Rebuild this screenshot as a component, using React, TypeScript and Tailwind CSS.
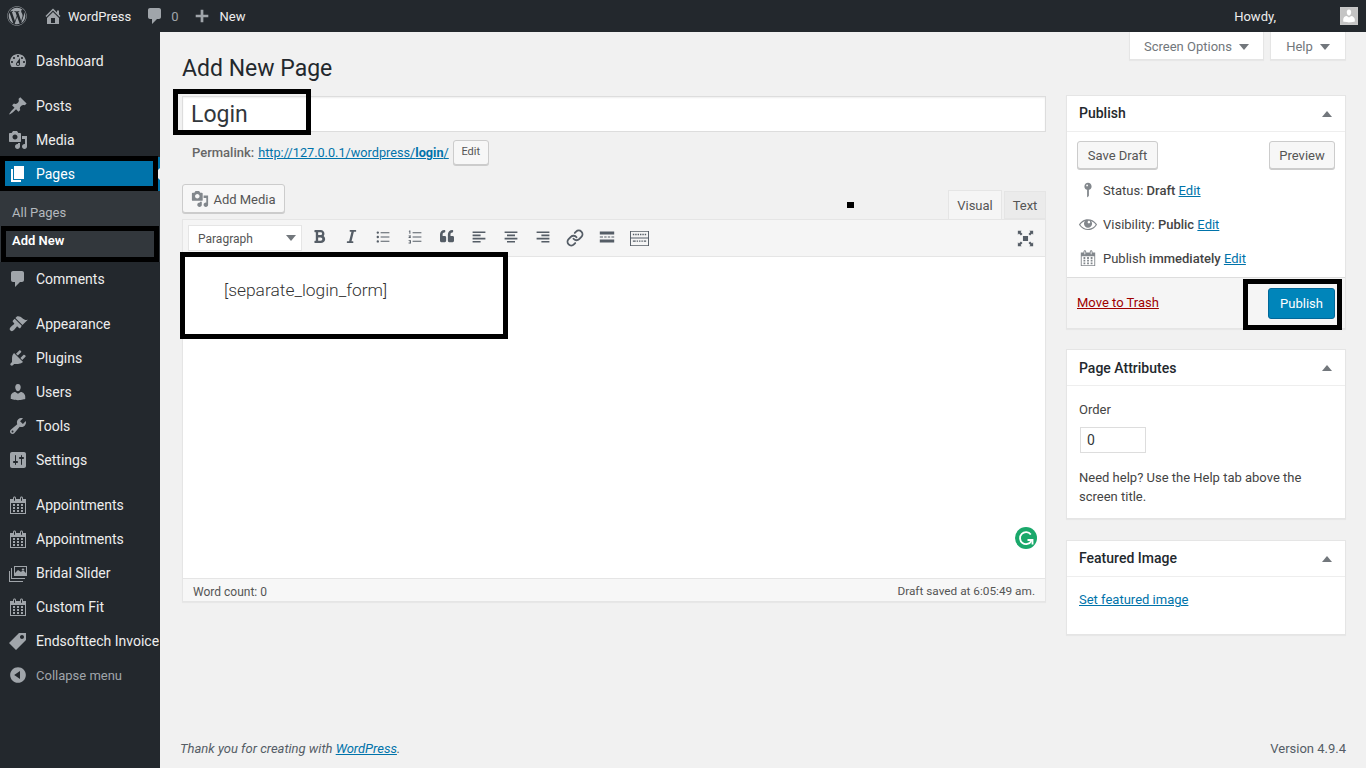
import type { ReactNode } from 'react';
import { FaWordpress, FaBold, FaItalic, FaQuoteLeft } from 'react-icons/fa';
import { Link } from 'lucide-react';

const paths = {
  home: 'M16 8.5l1.53 1.53-1.06 1.06L10 4.62l-6.47 6.47-1.06-1.06L10 2.5l4 4v-2h2v4zm-6-2.46l6 5.99V18H4v-5.97zM12 17v-5H8v5h4z',
  comment: 'M5 2h9c1.1 0 2 .9 2 2v7c0 1.1-.9 2-2 2h-2l-5 5v-5H5c-1.1 0-2-.9-2-2V4c0-1.1.9-2 2-2z',
  plus: 'M17 8.5v3h-5.5V17h-3v-5.5H3v-3h5.5V3h3v5.5H17z',
  dashboard:
    'M3.76 16h12.48c1.1-1.37 1.76-3.11 1.76-5 0-4.42-3.58-8-8-8s-8 3.58-8 8c0 1.89.66 3.63 1.76 5zM10 4c.55 0 1 .45 1 1s-.45 1-1 1-1-.45-1-1 .45-1 1-1zM6 6c.55 0 1 .45 1 1s-.45 1-1 1-1-.45-1-1 .45-1 1-1zm8 0c.55 0 1 .45 1 1s-.45 1-1 1-1-.45-1-1 .45-1 1-1zm-5.37 5.55L12 7v6c0 1.1-.9 2-2 2s-2-.9-2-2c0-.57.24-1.08.63-1.45zM4 10c.55 0 1 .45 1 1s-.45 1-1 1-1-.45-1-1 .45-1 1-1zm12 0c.55 0 1 .45 1 1s-.45 1-1 1-1-.45-1-1 .45-1 1-1zm-5 3c0-.55-.45-1-1-1s-1 .45-1 1 .45 1 1 1 1-.45 1-1z',
  post: 'M10.44 3.02l1.82-1.82 6.36 6.35-1.83 1.82c-1.05-.68-2.48-.57-3.41.36l-.75.75c-.92.93-1.04 2.35-.35 3.41l-1.83 1.82-2.41-2.41-2.8 2.79c-.42.42-3.38 2.71-3.8 2.29s1.86-3.39 2.28-3.81l2.79-2.79L4.1 9.36l1.83-1.82c1.05.69 2.48.57 3.4-.36l.75-.75c.93-.92 1.05-2.35.36-3.41z',
  media:
    'M13 11V4c0-.55-.45-1-1-1h-1.67L9 1H5L3.67 3H2c-.55 0-1 .45-1 1v7c0 .55.45 1 1 1h10c.55 0 1-.45 1-1zM7 4.5c1.38 0 2.5 1.12 2.5 2.5S8.38 9.5 7 9.5 4.5 8.38 4.5 7 5.62 4.5 7 4.5zM14 6h5v10.5c0 1.38-1.12 2.5-2.5 2.5S14 17.88 14 16.5s1.12-2.5 2.5-2.5c.17 0 .34.02.5.05V9h-3V6zm-4 8.05V13h2v3.5c0 1.38-1.12 2.5-2.5 2.5S7 17.88 7 16.5 8.12 14 9.5 14c.17 0 .34.02.5.05z',
  page: 'M6 15V2h10v13H6zm-1 1h8v2H3V5h2v11z',
  appearance:
    'M14.48 11.06L7.41 3.99l1.5-1.5c.5-.56 2.3-.47 3.51.32 1.21.8 1.43 1.28 2.91 2.1 1.18.64 2.45 1.26 4.45.85zM13.77 11.77L6.7 4.7 4.93 6.47c-.39.39-.39 1.02 0 1.41l1.06 1.06c.39.39.39 1.03 0 1.42-.6.6-1.43 1.11-2.21 1.69-.35.26-.7.53-1.01.84-1.43 1.43-1.4 2.52-.35 3.57s2.14 1.08 3.57-.35c.31-.31.58-.66.84-1.01.58-.78 1.09-1.61 1.69-2.21.39-.39 1.03-.39 1.42 0l1.06 1.06c.39.39 1.02.39 1.41 0z',
  plugin:
    'M13.11 4.36L9.87 7.6 8 5.73l3.24-3.24c.35-.34 1.05-.2 1.56.32.52.51.66 1.21.31 1.55zm-8 1.77l.91-1.12 9.01 9.01-1.19.84c-.71.71-2.63 1.16-3.82 1.16H6.14L4.9 17.26c-.59.59-1.54.59-2.12 0-.59-.58-.59-1.53 0-2.12l1.24-1.24v-3.88c0-1.13.4-3.19 1.09-3.89zm7.26 3.97l3.24-3.24c.34-.35 1.04-.21 1.55.31.52.51.66 1.21.31 1.55l-3.24 3.25z',
  users:
    'M10 9.25c-2.27 0-2.73-3.44-2.73-3.44C7 4.02 7.82 2 9.97 2c2.16 0 2.98 2.02 2.71 3.81 0 0-.41 3.44-2.68 3.44zm0 2.57L12.72 10c2.39 0 4.52 2.33 4.52 4.53v2.49s-3.65 1.13-7.24 1.13c-3.65 0-7.24-1.13-7.24-1.13v-2.49c0-2.25 1.94-4.48 4.47-4.48z',
  tools:
    'M16.68 9.77c-1.34 1.34-3.3 1.67-4.95.99l-5.41 6.52c-.99.99-2.59.99-3.58 0s-.99-2.59 0-3.57l6.52-5.42c-.68-1.65-.35-3.61.99-4.95 1.28-1.28 3.12-1.62 4.72-1.06l-2.89 2.89 2.82 2.82 2.86-2.87c.53 1.58.18 3.39-1.08 4.65zM3.81 16.21c.4.39 1.04.39 1.43 0 .4-.4.4-1.04 0-1.43-.39-.4-1.03-.4-1.43 0-.39.39-.39 1.03 0 1.43z',
  settings:
    'M18 16V4c0-1.1-.9-2-2-2H4c-1.1 0-2 .9-2 2v12c0 1.1.9 2 2 2h12c1.1 0 2-.9 2-2zM8 11h1c.55 0 1 .45 1 1s-.45 1-1 1H8v1.5c0 .28-.22.5-.5.5s-.5-.22-.5-.5V13H6c-.55 0-1-.45-1-1s.45-1 1-1h1V5.5c0-.28.22-.5.5-.5s.5.22.5.5V11zm5-2h-1c-.55 0-1-.45-1-1s.45-1 1-1h1V5.5c0-.28.22-.5.5-.5s.5.22.5.5V7h1c.55 0 1 .45 1 1s-.45 1-1 1h-1v5.5c0 .28-.22.5-.5.5s-.5-.22-.5-.5V9z',
  calendar:
    'M15 4h3v15H2V4h3V3c0-.41.15-.76.44-1.06.29-.29.65-.44 1.06-.44s.77.15 1.06.44c.29.3.44.65.44 1.06v1h4V3c0-.41.15-.76.44-1.06.29-.29.65-.44 1.06-.44s.77.15 1.06.44c.29.3.44.65.44 1.06v1zM6 3v2.5c0 .14.05.26.15.36.09.09.21.14.35.14s.26-.05.35-.14c.1-.1.15-.22.15-.36V3c0-.14-.05-.26-.15-.35-.09-.1-.21-.15-.35-.15s-.26.05-.35.15c-.1.09-.15.21-.15.35zm7 0v2.5c0 .14.05.26.14.36.1.09.22.14.36.14s.26-.05.36-.14c.09-.1.14-.22.14-.36V3c0-.14-.05-.26-.14-.35-.1-.1-.22-.15-.36-.15s-.26.05-.36.15c-.09.09-.14.21-.14.35zm4 15V8H3v10h14zM7 9v2H5V9h2zm2 0h2v2H9V9zm4 2V9h2v2h-2zm-6 1v2H5v-2h2zm2 0h2v2H9v-2zm4 2v-2h2v2h-2zm-6 1v2H5v-2h2zm4 2H9v-2h2v2zm4 0h-2v-2h2v2z',
  slider:
    'M6 3h13v10H6V3zm1 1v6l3-3 3 2 2-2 3 3V4H7zm8 1.5a1.3 1.3 0 1 1 0 2.6 1.3 1.3 0 0 1 0-2.6zM4 5v10h13v1H3V5h1zM2 8v10h13v1H1V8h1z',
  tag: 'M11 2h7v7L8 19l-7-7zm3 6c1.1 0 2-.9 2-2s-.9-2-2-2-2 .9-2 2 .9 2 2 2z',
  collapse:
    'M10 2.16c4.33 0 7.84 3.51 7.84 7.84s-3.51 7.84-7.84 7.84S2.16 14.33 2.16 10 5.71 2.16 10 2.16zm2 11.72V6.12L6.18 9.97z',
  eye: 'M18.3 9.5C15 4.9 8.5 3.8 3.9 7.2c-1.2.9-2.2 2.1-3 3.4.2.4.5.8.8 1.2 3.3 4.6 9.6 5.6 14.2 2.4.9-.7 1.7-1.4 2.4-2.4.3-.4.5-.8.8-1.2-.3-.4-.5-.8-.8-1.1zm-8.3-2.3c.5-.5 1.3-.5 1.8 0s.5 1.3 0 1.8-1.3.5-1.8 0-.5-1.3 0-1.8zm0 7.7c-3.1 0-6-1.6-7.7-4.2C3.5 9 5.1 7.8 7 7c-.7.8-1 1.7-1 2.7 0 2.2 1.7 4.1 4 4.1 2.2 0 4.1-1.7 4.1-4 0-1-.4-2-1.1-2.7 1.9.8 3.5 2 4.7 3.7-1.7 2.6-4.6 4.1-7.7 4.1z',
  pin: 'M14 6c0 1.86-1.28 3.41-3 3.86V16c0 1-2 2-2 2V9.86c-1.72-.45-3-2-3-3.86 0-2.21 1.79-4 4-4s4 1.79 4 4zM8 5c0 .55.45 1 1 1s1-.45 1-1-.45-1-1-1-1 .45-1 1z',
  alignLeft: 'M2 3h16v2H2zM2 7h10v2H2zM2 11h16v2H2zM2 15h10v2H2z',
  alignCenter: 'M2 3h16v2H2zM5 7h10v2H5zM2 11h16v2H2zM5 15h10v2H5z',
  alignRight: 'M2 3h16v2H2zM8 7h10v2H8zM2 11h16v2H2zM8 15h10v2H8z',
  ul: 'M3.500 3a1.500 1.500 0 1 1 0 3 1.500 1.500 0 0 1 0-3zM3.500 8.500a1.500 1.500 0 1 1 0 3 1.500 1.500 0 0 1 0-3zM3.500 14a1.500 1.500 0 1 1 0 3 1.500 1.500 0 0 1 0-3zM7 4h11v1.200H7zM7 9.400h11v1.200H7zM7 14.800h11v1.200H7z',
  ol: 'M3 2h1.200v4H3V3H2zM2 8h3v1L3.400 10.400H5v1H2v-1L3.600 9H2zM2 14h3v4H2v-1h2v-.6H3v-.8h1V15H2zM7 4h11v1.200H7zM7 9.400h11v1.200H7zM7 14.800h11v1.200H7z',
  more: 'M1 3h18v4H1zM1 9.250h4v1.500H1zM6.500 9.250h3v1.500h-3zM11 9.250h3v1.500h-3zM15.500 9.250H19v1.500h-3.500zM1 13h18v4H1z',
  keyboard:
    'M0 2h20v16H0zM1 3v6h18V3zM1 10v7h18v-7zM3 5h1.500v1.500H3zM5.500 5H7v1.500H5.500zM8 5h1.500v1.500H8zM10.500 5H12v1.500h-1.500zM13 5h1.500v1.500H13zM15.500 5H17v1.500h-1.500zM3 12h3v1.500H3zM7 12h1.500v1.500H7zM9.500 12H11v1.500H9.500zM12 12h1.500v1.500H12zM14.500 12H17v1.500h-2.500z',
  fullscreen:
    'M7 7h6v6H7zM1 1h4.500L4.200 2.300 6.500 4.600 4.600 6.500 2.300 4.200 1 5.500zM19 1v4.500l-1.300-1.300-2.300 2.300-1.900-1.900 2.300-2.300L14.500 1zM1 19v-4.500l1.300 1.300 2.300-2.300 1.900 1.900-2.300 2.300L5.500 19zM19 19h-4.500l1.300-1.300-2.300-2.300 1.900-1.900 2.300 2.300 1.300-1.300z',
};

const Dash = ({ d, className }: { d: string; className: string }) => (
  <svg viewBox="0 0 20 20" className={className} fill="currentColor" fillRule="evenodd">
    <path d={d} />
  </svg>
);

const menuTop = [{ name: 'Dashboard', icon: paths.dashboard }];
const menuContent = [
  { name: 'Posts', icon: paths.post },
  { name: 'Media', icon: paths.media },
];
const menuTools = [
  { name: 'Appearance', icon: paths.appearance },
  { name: 'Plugins', icon: paths.plugin },
  { name: 'Users', icon: paths.users },
  { name: 'Tools', icon: paths.tools },
  { name: 'Settings', icon: paths.settings },
];
const menuPlugins = [
  { name: 'Appointments', icon: paths.calendar },
  { name: 'Appointments', icon: paths.calendar },
  { name: 'Bridal Slider', icon: paths.slider },
  { name: 'Custom Fit', icon: paths.calendar },
  { name: 'Endsofttech Invoice', icon: paths.tag },
];

const MenuItem = ({ name, icon }: { name: string; icon: string }) => (
  <div className="flex h-[34px] items-center text-[14px] text-[#eeeeee]">
    <div className="flex w-[36px] shrink-0 justify-center pr-[1px]">
      <Dash d={icon} className="h-5 w-5 text-[#a0a5aa]" />
    </div>
    <span className="whitespace-nowrap">{name}</span>
  </div>
);

const Sidebar = () => (
  <aside className="w-[160px] shrink-0 bg-[#23282d] pt-3">
    {menuTop.map((m) => (
      <MenuItem key={m.name} {...m} />
    ))}
    <div className="h-[11px]" />
    {menuContent.map((m) => (
      <MenuItem key={m.name} {...m} />
    ))}
    <div className="relative flex h-[34px] items-center bg-[#0073aa] text-[14px] text-white">
      <div className="flex w-[36px] justify-center pr-[1px]">
        <Dash d={paths.page} className="h-5 w-5" />
      </div>
      <span>Pages</span>
      <div className="absolute top-[11px] right-0 h-0 w-0 border-y-[6px] border-r-[6px] border-y-transparent border-r-[#f1f1f1]" />
    </div>
    <div className="h-[71px] bg-[#32373c] pt-[13px] pl-3 text-[13px]">
      <div className="leading-[18px] text-[#b4b9be]">All Pages</div>
      <div className="mt-[10px] leading-[18px] font-semibold text-white">Add New</div>
    </div>
    <MenuItem name="Comments" icon={paths.comment} />
    <div className="h-[11px]" />
    {menuTools.map((m) => (
      <MenuItem key={m.name} {...m} />
    ))}
    <div className="h-[11px]" />
    {menuPlugins.map((m, i) => (
      <MenuItem key={i} {...m} />
    ))}
    <div className="flex h-[34px] items-center text-[13px] text-[#a0a5aa]">
      <div className="flex w-[36px] justify-center pr-[1px]">
        <Dash d={paths.collapse} className="h-5 w-5" />
      </div>
      <span className="pt-px">Collapse menu</span>
    </div>
  </aside>
);

const AdminBar = () => (
  <header className="flex h-[32px] items-center bg-[#23282d] text-[13px] text-[#eeeeee]">
    <FaWordpress className="ml-[7px] h-5 w-5 text-[#a0a5aa]" />
    <Dash d={paths.home} className="ml-[16px] h-5 w-5 text-[#a0a5aa]" />
    <span className="ml-[5px] pt-px">WordPress</span>
    <Dash d={paths.comment} className="ml-[14px] h-5 w-5 text-[#a0a5aa]" />
    <span className="ml-[6px] pt-px text-[#a0a5aa]">0</span>
    <Dash d={paths.plus} className="ml-[15px] h-[18px] w-[18px] text-[#a0a5aa]" />
    <span className="ml-[8px] pt-px">New</span>
    <span className="ml-auto pt-px">Howdy,</span>
    <div className="mr-2 ml-[64px] flex h-[18px] w-[18px] items-end justify-center overflow-hidden border border-[#c8c8c8] bg-[#c4c4c4]">
      <Dash d={paths.users} className="h-4 w-4 text-white" />
    </div>
  </header>
);

const Btn = ({ children, className = '' }: { children: ReactNode; className?: string }) => (
  <div
    className={`flex items-center justify-center rounded-[3px] border border-[#cccccc] bg-[#f7f7f7] pt-px text-[#555555] shadow-[0_1px_0_#cccccc] ${className}`}
  >
    {children}
  </div>
);

const Caret = ({ up = false, className = '' }: { up?: boolean; className?: string }) => (
  <div
    className={`h-0 w-0 border-x-[5px] border-x-transparent ${
      up ? 'border-b-[6px] border-b-[#72777c]' : 'border-t-[6px] border-t-[#72777c]'
    } ${className}`}
  />
);

const Box = ({
  title,
  titleClass = '',
  children,
}: {
  title: string;
  titleClass?: string;
  children: ReactNode;
}) => (
  <section className="border border-[#e5e5e5] bg-white shadow-[0_1px_1px_rgba(0,0,0,0.04)]">
    <div className="flex h-[36px] items-center justify-between border-b border-[#eeeeee] pr-[13px] pl-3 text-[14px] font-medium text-[#23282d]">
      <span className={titleClass}>{title}</span>
      <Caret up />
    </div>
    {children}
  </section>
);

const EditLink = () => <span className="text-[#0073aa] underline">Edit</span>;

const Toolbar = () => (
  <div className="flex h-[37px] items-center border-b border-[#e5e5e5] bg-[#f5f5f5] pl-[5px] text-[#555d66]">
    <div className="flex h-[26px] w-[114px] items-center justify-between border border-[#e5e5e5] bg-white pr-[5px] pl-[9px] text-[12px] text-[#555555]">
      <span className="pt-px">Paragraph</span>
      <Caret className="border-t-[#555d66]" />
    </div>
    <div className="ml-[1px] flex">
      <span className="flex w-[32px] justify-center"><FaBold className="h-[15px] w-[15px]" /></span>
      <span className="flex w-[32px] justify-center"><FaItalic className="h-[15px] w-[15px]" /></span>
      <span className="flex w-[32px] justify-center"><Dash d={paths.ul} className="h-4 w-4" /></span>
      <span className="flex w-[32px] justify-center"><Dash d={paths.ol} className="h-4 w-4" /></span>
      <span className="flex w-[32px] justify-center"><FaQuoteLeft className="h-[14px] w-[16px]" /></span>
      <span className="flex w-[32px] justify-center"><Dash d={paths.alignLeft} className="h-4 w-4" /></span>
      <span className="flex w-[32px] justify-center"><Dash d={paths.alignCenter} className="h-4 w-4" /></span>
      <span className="flex w-[32px] justify-center"><Dash d={paths.alignRight} className="h-4 w-4" /></span>
      <span className="flex w-[32px] justify-center"><Link className="h-[18px] w-[18px]" strokeWidth={2.5} /></span>
      <span className="flex w-[32px] justify-center"><Dash d={paths.more} className="h-4 w-4" /></span>
      <span className="flex w-[32px] justify-center"><Dash d={paths.keyboard} className="h-[19px] w-[19px]" /></span>
    </div>
    <Dash d={paths.fullscreen} className="mr-[11px] ml-auto h-[17px] w-[17px]" />
  </div>
);

const GrammarlyBadge = () => (
  <svg viewBox="0 0 22 22" className="absolute top-[307px] right-[8px] h-[22px] w-[22px]">
    <circle cx="11" cy="11" r="11" fill="#1aa86b" />
    <path d="M15.800 7.500A6 6 0 1 0 16.300 14" fill="none" stroke="#ffffff" strokeWidth="1.800" />
    <path d="M12.500 13h5v4.500" fill="none" stroke="#ffffff" strokeWidth="1.800" />
  </svg>
);

const Editor = () => (
  <div className="relative border border-[#e5e5e5] bg-white shadow-[0_1px_1px_rgba(0,0,0,0.04)]">
    <Toolbar />
    <div className="h-[321px] pt-[24px] pl-[41px] text-[17.4px] leading-[18px] font-light text-[#333333]">
      [separate_login_form]
    </div>
    <GrammarlyBadge />
    <div className="flex h-[23px] items-center justify-between border-t border-[#e5e5e5] bg-[#f7f7f7] px-[10px] pt-[3px] text-[12px] text-[#555555]">
      <span>Word count: 0</span>
      <span className="text-[11.8px]">Draft saved at 6:05:49 am.</span>
    </div>
  </div>
);

const LeftColumn = () => (
  <div className="w-[864px] shrink-0">
    <div className="flex h-[36px] items-center border border-[#dddddd] bg-white pt-[3px] pl-2 text-[23px] text-[#32373c] shadow-[inset_0_1px_2px_rgba(0,0,0,0.07)]">
      Login
    </div>
    <div className="mt-[7px] flex h-[26px] items-center pl-[10px] text-[13px] text-[#666666]">
      <span className="pt-[2px] font-medium">Permalink:</span>
      <span className="ml-[4px] pt-[2px] text-[12.7px] text-[#0073aa] underline">
        http://127.0.0.1/wordpress/<b>login</b>/
      </span>
      <Btn className="ml-[4px] h-[25px] w-[36px] text-[11px]">Edit</Btn>
    </div>
    <div className="mt-[19px] flex h-[35px] items-start justify-between">
      <Btn className="h-[29px] w-[103px] gap-[4px] text-[13px]">
        <Dash d={paths.media} className="h-[18px] w-[18px] text-[#82878c]" />
        <span className="pt-px">Add Media</span>
      </Btn>
      <div className="mt-[6px] flex items-end text-[13px] text-[#555555]">
        <div className="relative -mb-[1px] flex h-[30px] w-[54px] items-center justify-center border border-b-0 border-[#e5e5e5] bg-[#f5f5f5]">
          Visual
        </div>
        <div className="ml-[2px] flex h-[28px] w-[42px] items-center justify-center border border-[#e5e5e5] bg-[#ebebeb] pt-[2px]">
          Text
        </div>
      </div>
    </div>
    <Editor />
  </div>
);

const StatusRow = ({ icon, children }: { icon: ReactNode; children: ReactNode }) => (
  <div className="flex h-[34px] items-center text-[13px] text-[#444444]">
    <span className="flex w-[25px] justify-center">{icon}</span>
    <span className="ml-[3px] pt-px">{children}</span>
  </div>
);

const RightColumn = () => (
  <div className="-mt-[1px] flex w-[280px] shrink-0 flex-col">
    <Box title="Publish">
      <div className="flex justify-between px-[10px] pt-[9px] pb-[4px] text-[13px]">
        <Btn className="h-[28px] w-[81px]">Save Draft</Btn>
        <Btn className="h-[28px] w-[66px]">Preview</Btn>
      </div>
      <div className="pb-[2px] pl-[8px]">
        <StatusRow icon={<Dash d={paths.pin} className="h-[18px] w-[18px] text-[#82878c]" />}>
          Status: <b className="font-medium">Draft</b> <EditLink />
        </StatusRow>
        <StatusRow icon={<Dash d={paths.eye} className="h-[20px] w-[20px] text-[#82878c]" />}>
          Visibility: <b className="font-medium">Public</b> <EditLink />
        </StatusRow>
        <StatusRow icon={<Dash d={paths.calendar} className="h-[18px] w-[18px] text-[#82878c]" />}>
          Publish <b className="font-medium">immediately</b> <EditLink />
        </StatusRow>
      </div>
      <div className="flex h-[51px] items-center justify-between border-t border-[#dddddd] bg-[#f5f5f5] pr-[10px] pl-[10px] text-[13px]">
        <span className="text-[#a00000] underline">Move to Trash</span>
        <div className="flex h-[31px] w-[67px] items-center justify-center rounded-[3px] border border-[#006799] bg-[#0085ba] pt-px text-white">
          Publish
        </div>
      </div>
    </Box>
    <div className="mt-[20px]">
      <Box title="Page Attributes" titleClass="pt-px">
        <div className="px-3 pt-[15px] pb-[12px] text-[13px] text-[#444444]">
          <div className="leading-[18px]">Order</div>
          <div className="mt-[8px] ml-[1px] flex h-[26px] w-[66px] items-center border border-[#dddddd] bg-white pl-[6px] text-[14px] text-[#32373c]">
            0
          </div>
          <p className="mt-[15px] leading-[19px]">
            Need help? Use the Help tab above the screen title.
          </p>
        </div>
      </Box>
    </div>
    <div className="mt-[21px]">
      <Box title="Featured Image">
        <div className="h-[57px] px-3 pt-[14px] text-[13px] leading-[18px] text-[#0073aa] underline">
          Set featured image
        </div>
      </Box>
    </div>
  </div>
);

const Main = () => (
  <main className="flex min-w-0 flex-1 flex-col pr-5 pl-[22px]">
    <div className="flex h-[64px] items-start justify-between">
      <h1 className="pt-[22px] text-[23px] leading-[30px] text-[#23282d]">Add New Page</h1>
      <div className="flex gap-[6px] text-[13px] text-[#72777c]">
        <div className="flex h-[28px] w-[135px] items-center justify-center gap-[7px] border border-t-0 border-[#e5e5e5] bg-white pt-[2px] shadow-[0_1px_1px_rgba(0,0,0,0.04)]">
          Screen Options <Caret />
        </div>
        <div className="flex h-[28px] w-[76px] items-center justify-center gap-[7px] border border-t-0 border-[#e5e5e5] bg-white pt-[2px] shadow-[0_1px_1px_rgba(0,0,0,0.04)]">
          Help <Caret />
        </div>
      </div>
    </div>
    <div className="flex gap-5">
      <LeftColumn />
      <RightColumn />
    </div>
    <footer className="mt-auto flex h-[30px] items-start justify-between pt-[2px] text-[13px] leading-[18px] text-[#555d66]">
      <span className="-ml-[2px] italic">
        Thank you for creating with <span className="text-[#0073aa] underline">WordPress</span>.
      </span>
      <span className="text-[13px]">Version 4.9.4</span>
    </footer>
  </main>
);

export default function App() {
  return (
    <div
      className="relative flex h-[768px] w-[1366px] flex-col overflow-hidden bg-[#f1f1f1]"
      style={{ fontFamily: 'Roboto, "Noto Sans", sans-serif' }}
    >
      <AdminBar />
      <div className="flex min-h-0 flex-1">
        <Sidebar />
        <Main />
      </div>
      {/* black marks drawn over the screenshot */}
      <div className="absolute top-[89px] left-[173px] h-[46px] w-[138px] border-[5px] border-black" />
      <div className="absolute top-[156px] left-0 h-[35px] w-[158px] border-[5px] border-black" />
      <div className="absolute top-[226px] left-[1px] h-[36px] w-[158px] border-[5px] border-black" />
      <div className="absolute top-[252px] left-[180px] h-[87px] w-[328px] border-[5px] border-black" />
      <div className="absolute top-[279px] left-[1243px] h-[51px] w-[99px] border-[5px] border-black" />
      <div className="absolute top-[202px] left-[847px] h-[6px] w-[7px] bg-black" />
    </div>
  );
}
